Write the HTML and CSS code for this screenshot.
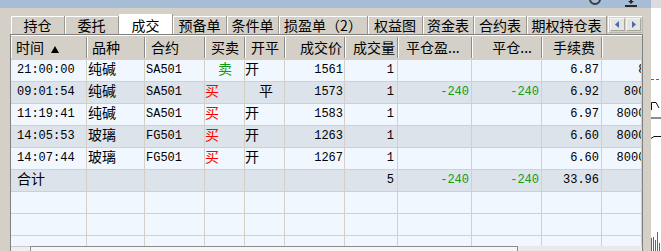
FILE: index.html
```html
<!DOCTYPE html>
<html lang="zh-CN">
<head>
    <meta charset="UTF-8">
    <title>成交</title>
    <link rel="stylesheet" href="styles.css">
</head>
<body>
<div class="screen">
    <div class="main">
        <div class="topbar">
            <svg class="ico" width="12" height="8" viewBox="0 0 12 8"><circle cx="6" cy="-1" r="5" fill="none" stroke="#3a3a3a" stroke-width="2"/></svg>
            <svg class="ico" width="12" height="8" viewBox="0 0 12 8"><path d="M6 0 V3" stroke="#2a2a2a" stroke-width="2"/><path d="M3 1 L6 4 L9 1 Z" fill="#2a2a2a"/><path d="M0 6 H12" stroke="#2a2a2a" stroke-width="2"/></svg>
        </div>

        <div class="tabbar">
            <div class="tabs">
                <div class="tab w54">持仓</div>
                <div class="tab w54">委托</div>
                <div class="tab w54 on">成交</div>
                <div class="tab w54">预备单</div>
                <div class="tab w52">条件单</div>
                <div class="tab w89">损盈单（2）</div>
                <div class="tab w55">权益图</div>
                <div class="tab w51">资金表</div>
                <div class="tab w53">合约表</div>
                <div class="tab w80">期权持仓表</div>
            </div>
            <div class="tab-scroll">
                <span class="sbtn"><svg width="5" height="7" viewBox="0 0 5 7"><path d="M4 0 V7 L0 3.5 Z" fill="#4a6cb0"/></svg></span>
                <span class="sbtn"><svg width="5" height="7" viewBox="0 0 5 7"><path d="M1 0 V7 L5 3.5 Z" fill="#4a6cb0"/></svg></span>
            </div>
        </div>

        <div class="grid">
            <div class="table">
                <div class="row head">
                    <div class="c pl5">时间 <svg class="sort" width="8" height="7" viewBox="0 0 8 7"><path d="M4 0 L8 7 H0 Z" fill="#000"/></svg></div>
                    <div class="c pl5">品种</div>
                    <div class="c pl6">合约</div>
                    <div class="c pl6">买卖</div>
                    <div class="c pl6">开平</div>
                    <div class="c r pr2">成交价</div>
                    <div class="c pl8">成交量</div>
                    <div class="c pl8">平仓盈...</div>
                    <div class="c r pr9">平仓...</div>
                    <div class="c r pr6">手续费</div>
                    <div class="c"></div>
                </div>

                <div class="row">
                    <div class="c pl6">21:00:00</div>
                    <div class="c zh pl1">纯碱</div>
                    <div class="c pl1">SA501</div>
                    <div class="c zh sell pl13">卖</div>
                    <div class="c zh">开</div>
                    <div class="c r pr1">1561</div>
                    <div class="c r pr3">1</div>
                    <div class="c"></div>
                    <div class="c"></div>
                    <div class="c r pr2">6.87</div>
                    <div class="c"><span class="cut">8.00</span></div>
                </div>
                <div class="row alt">
                    <div class="c pl6">09:01:54</div>
                    <div class="c zh pl1">纯碱</div>
                    <div class="c pl1">SA501</div>
                    <div class="c zh buy">买</div>
                    <div class="c zh pl14">平</div>
                    <div class="c r pr1">1573</div>
                    <div class="c r pr3">1</div>
                    <div class="c r pr2 up">-240</div>
                    <div class="c r pr2 up">-240</div>
                    <div class="c r pr2">6.92</div>
                    <div class="c"><span class="cut">800.00</span></div>
                </div>
                <div class="row">
                    <div class="c pl6">11:19:41</div>
                    <div class="c zh pl1">纯碱</div>
                    <div class="c pl1">SA501</div>
                    <div class="c zh buy">买</div>
                    <div class="c zh">开</div>
                    <div class="c r pr1">1583</div>
                    <div class="c r pr3">1</div>
                    <div class="c"></div>
                    <div class="c"></div>
                    <div class="c r pr2">6.97</div>
                    <div class="c"><span class="cut">8000.00</span></div>
                </div>
                <div class="row alt">
                    <div class="c pl6">14:05:53</div>
                    <div class="c zh pl1">玻璃</div>
                    <div class="c pl1">FG501</div>
                    <div class="c zh buy">买</div>
                    <div class="c zh">开</div>
                    <div class="c r pr1">1263</div>
                    <div class="c r pr3">1</div>
                    <div class="c"></div>
                    <div class="c"></div>
                    <div class="c r pr2">6.60</div>
                    <div class="c"><span class="cut">8000.00</span></div>
                </div>
                <div class="row">
                    <div class="c pl6">14:07:44</div>
                    <div class="c zh pl1">玻璃</div>
                    <div class="c pl1">FG501</div>
                    <div class="c zh buy">买</div>
                    <div class="c zh">开</div>
                    <div class="c r pr1">1267</div>
                    <div class="c r pr3">1</div>
                    <div class="c"></div>
                    <div class="c"></div>
                    <div class="c r pr2">6.60</div>
                    <div class="c"><span class="cut">8000.00</span></div>
                </div>
                <div class="row alt">
                    <div class="c zh pl6">合计</div>
                    <div class="c"></div>
                    <div class="c"></div>
                    <div class="c"></div>
                    <div class="c"></div>
                    <div class="c"></div>
                    <div class="c r pr3">5</div>
                    <div class="c r pr2 up">-240</div>
                    <div class="c r pr2 up">-240</div>
                    <div class="c r pr2">33.96</div>
                    <div class="c"></div>
                </div>
                <div class="row">
                    <div class="c"></div><div class="c"></div><div class="c"></div><div class="c"></div>
                    <div class="c"></div><div class="c"></div><div class="c"></div><div class="c"></div>
                    <div class="c"></div><div class="c"></div><div class="c"></div>
                </div>
                <div class="row">
                    <div class="c"></div><div class="c"></div><div class="c"></div><div class="c"></div>
                    <div class="c"></div><div class="c"></div><div class="c"></div><div class="c"></div>
                    <div class="c"></div><div class="c"></div><div class="c"></div>
                </div>
                <div class="row">
                    <div class="c"></div><div class="c"></div><div class="c"></div><div class="c"></div>
                    <div class="c"></div><div class="c"></div><div class="c"></div><div class="c"></div>
                    <div class="c"></div><div class="c"></div><div class="c"></div>
                </div>
            </div>
            <div class="hscroll">
                <div class="hs-btn"></div>
                <div class="hs-thumb"></div>
                <div class="hs-track"></div>
            </div>
        </div>
    </div>

    <div class="side">
        <svg width="10" height="251" viewBox="0 0 10 251">
            <rect x="0" y="0" width="10" height="8" fill="#dcdcdc"/>
            <path d="M0 79.5 H10" stroke="#3a64d0" stroke-dasharray="3 2"/>
            <path d="M0.5 110 V102.5 H5 L8 108" fill="none" stroke="#111"/>
            <path d="M0 118 H10" stroke="#8c8c8c" stroke-width="2"/>
            <path d="M0 138.5 L3 136.5 H10" fill="none" stroke="#111"/>
            <rect x="0" y="238" width="1" height="13" fill="#3a64d0"/>
            <rect x="2" y="237" width="1" height="14" fill="#3a64d0"/>
            <rect x="4" y="240" width="1" height="11" fill="#3a64d0"/>
            <rect x="6" y="232" width="1" height="19" fill="#3a64d0"/>
            <rect x="8" y="243" width="1" height="8" fill="#3a64d0"/>
        </svg>
    </div>
</div>
</body>
</html>
```

FILE: styles.css
```css
body {
    margin: 0;
    background-color: #d4d0c8;
    font-family: "Noto Sans CJK SC", sans-serif;
    font-size: 14px;
    color: #000;
}

.screen {
    display: flex;
    width: 661px;
    height: 251px;
    overflow: hidden;
}

.main {
    width: 651px;
    flex: none;
}

.side {
    width: 10px;
    flex: none;
    background-color: #fff;
}

.side svg {
    display: block;
}

/* top strip with clipped toolbar icons */
.topbar {
    height: 8px;
    background-color: #a7bcd5;
    display: flex;
    justify-content: flex-end;
    gap: 24px;
    padding-right: 14px;
    overflow: hidden;
}

.ico {
    display: block;
}

/* tabs */
.tabbar {
    display: flex;
    height: 18px;
    margin: 8px 0 0 11px;
}

.tabs {
    display: flex;
}

.tab {
    height: 18px;
    line-height: 18px;
    box-sizing: border-box;
    text-align: center;
    white-space: nowrap;
    border-right: 1px solid #9a978f;
    box-shadow: inset 1px 1px #fff;
}

.tab.on {
    background-color: #fff;
    height: 20px;
    margin-top: -2px;
    padding-top: 2px;
    box-shadow: none;
}

.w51 { width: 51px; }
.w52 { width: 52px; }
.w53 { width: 53px; }
.w54 { width: 54px; }
.w55 { width: 55px; }
.w80 { width: 80px; }
.w89 { width: 89px; }

.tab-scroll {
    display: flex;
    gap: 1px;
    width: 35px;
    height: 17px;
    margin-left: 1px;
    padding: 1px;
    box-sizing: border-box;
    border: 1px solid #fff;
    border-right-color: #b8b5ae;
    border-bottom-color: #b8b5ae;
}

.sbtn {
    flex: 1;
    display: flex;
    align-items: center;
    justify-content: center;
    background-color: #e6e4df;
    border: 1px solid #f6f6f4;
    border-right-color: #a9a69f;
    border-bottom-color: #a9a69f;
}

/* data grid */
.grid {
    width: 633px;
    height: 217px;
    margin-left: 10px;
    box-sizing: border-box;
    border: 1px solid #808080;
    border-bottom: none;
    background-color: #f0f7ff;
    overflow: hidden;
}

.table {
    height: 211px;
    overflow: hidden;
}

.row {
    display: grid;
    grid-template-columns: 76px 58px 60px 40px 40px 60px 53px 74px 70px 60px minmax(0, 1fr);
    height: 22px;
    box-sizing: border-box;
    border-bottom: 1px solid #d4d0c8;
    font-family: "Liberation Mono", "Noto Sans CJK SC", monospace;
    font-size: 12px;
    line-height: 21px;
}

.row.alt {
    background-color: #dce3eb;
}

.row .c {
    box-sizing: border-box;
    border-right: 1px solid #d4d0c8;
    white-space: nowrap;
    overflow: hidden;
}

/* last column runs past the grid edge and is cut there */
.cut {
    display: inline-block;
    width: 65px;
    text-align: right;
}

.row.head {
    height: 25px;
    background-color: #d4d0c8;
    box-shadow: inset 0 1px #fff;
    font-family: "Noto Sans CJK SC", sans-serif;
    font-size: 14px;
    line-height: 24px;
}

.row.head .c {
    border-right: 1px solid #8a8a8a;
    box-shadow: inset 1px 0 #fff;
    margin: 2px 0 1px;
    line-height: 21px;
}

.row.head .c:last-child {
    border-right: none;
}

.sort {
    margin-left: 4px;
}

.zh {
    font-size: 14px;
}

.r { text-align: right; }

.pl1 { padding-left: 1px; }
.pl5 { padding-left: 5px; }
.pl6 { padding-left: 6px; }
.pl8 { padding-left: 8px; }
.pl13 { padding-left: 13px; }
.pl14 { padding-left: 14px; }
.pr1 { padding-right: 1px; }
.pr2 { padding-right: 2px; }
.pr3 { padding-right: 3px; }
.pr6 { padding-right: 6px; }
.pr9 { padding-right: 9px; }

.buy { color: #f00; }
.sell { color: #139a13; }
.up { color: #139a13; }

/* horizontal scrollbar, cut by the window edge */
.hscroll {
    display: flex;
    height: 17px;
}

.hs-btn {
    width: 19px;
    background-color: #efefef;
    border-top: 1px solid #c8c8c8;
}

.hs-thumb {
    width: 488px;
    box-sizing: border-box;
    background-color: #f6f6f6;
    border: 1px solid #8c8c8c;
    border-bottom: none;
}

.hs-track {
    flex: 1;
    background-color: #e9e9e9;
}
```
